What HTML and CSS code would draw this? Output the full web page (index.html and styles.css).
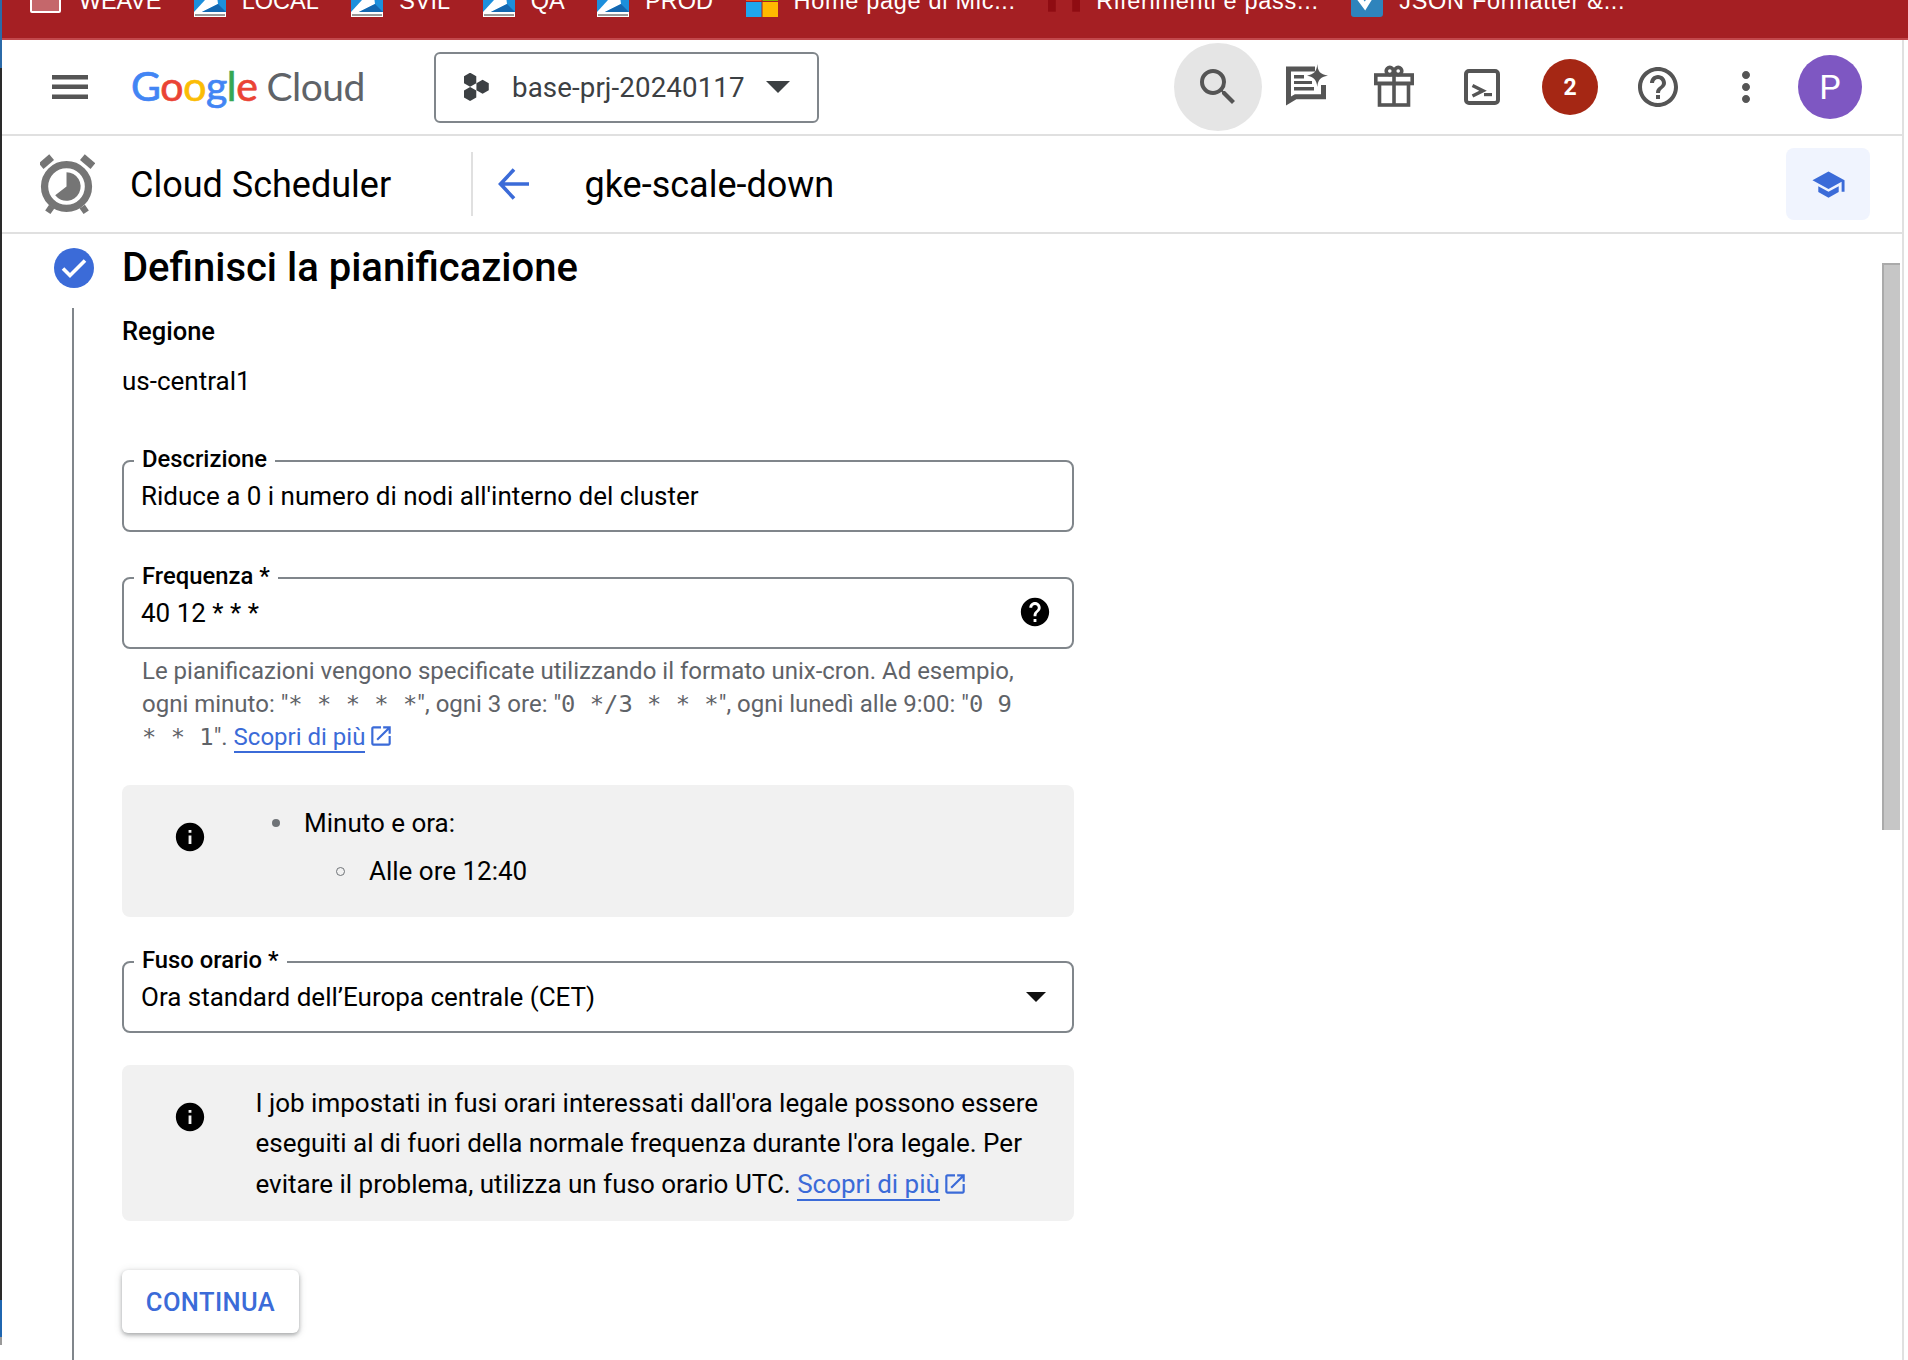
FILE: index.html
```html
<!DOCTYPE html>
<html lang="it">
<head>
<meta charset="utf-8">
<title>Cloud Scheduler</title>
<link rel="stylesheet" href="styles.css">
</head>
<body>
<div class="edge"></div>
<nav class="bookmarks">
  <div class="bm-row">
    <a class="bm bm-weave"><span class="bm-folder"></span>WEAVE</a>
    <a class="bm"><svg class="bm-ico" viewBox="0 0 32 33"><rect width="32" height="33" fill="#fff"/><rect width="32" height="28" fill="#1c8fdc"/><polygon points="0,28 22,4 24,20 8,28" fill="#fff"/><polygon points="8,28 24,20 32,28" fill="#1467b0"/><rect x="1" y="30" width="30" height="2" fill="#999"/></svg>LOCAL</a>
    <a class="bm"><svg class="bm-ico" viewBox="0 0 32 33"><rect width="32" height="33" fill="#fff"/><rect width="32" height="28" fill="#1c8fdc"/><polygon points="0,28 22,4 24,20 8,28" fill="#fff"/><polygon points="8,28 24,20 32,28" fill="#1467b0"/><rect x="1" y="30" width="30" height="2" fill="#999"/></svg>SVIL</a>
    <a class="bm"><svg class="bm-ico" viewBox="0 0 32 33"><rect width="32" height="33" fill="#fff"/><rect width="32" height="28" fill="#1c8fdc"/><polygon points="0,28 22,4 24,20 8,28" fill="#fff"/><polygon points="8,28 24,20 32,28" fill="#1467b0"/><rect x="1" y="30" width="30" height="2" fill="#999"/></svg>QA</a>
    <a class="bm"><svg class="bm-ico" viewBox="0 0 32 33"><rect width="32" height="33" fill="#fff"/><rect width="32" height="28" fill="#1c8fdc"/><polygon points="0,28 22,4 24,20 8,28" fill="#fff"/><polygon points="8,28 24,20 32,28" fill="#1467b0"/><rect x="1" y="30" width="30" height="2" fill="#999"/></svg>PROD</a>
    <a class="bm bm-long"><svg class="bm-ico" viewBox="0 0 32 33"><rect width="15.5" height="17" fill="#f25022"/><rect x="16.5" width="15.5" height="17" fill="#7fba00"/><rect y="18" width="15.5" height="15" fill="#1ea7ee"/><rect x="16.5" y="18" width="15.5" height="15" fill="#ffb900"/></svg>Home page di Mic...</a>
    <a class="bm bm-long"><svg class="bm-ico" viewBox="0 0 33 33"><rect width="8" height="28" fill="#8f0c12"/><rect x="25" width="8" height="28" fill="#8f0c12"/></svg>Riferimenti e pass...</a>
    <a class="bm bm-long"><svg class="bm-ico" viewBox="0 0 32 33"><rect width="32" height="33" rx="3" fill="#2f84bc"/><polyline points="8,14 14,22 24,6" fill="none" stroke="#fff" stroke-width="5"/></svg>JSON Formatter &amp;...</a>
  </div>
</nav>
<div class="app">
  <header class="topbar">
    <svg class="menu" viewBox="0 0 36 24"><rect width="36" height="4.5" fill="#555"/><rect y="9.5" width="36" height="4.5" fill="#555"/><rect y="19.5" width="36" height="4.5" fill="#555"/></svg>
    <div class="logo"><span class="logo-google"><span class="c-b">G</span><span class="c-r">o</span><span class="c-y">o</span><span class="c-b">g</span><span class="c-g">l</span><span class="c-r">e</span></span><span class="logo-cloud">Cloud</span></div>
    <button class="project">
      <svg class="project-ico" viewBox="0 0 26 28"><polygon points="8,0 14.5,3.7 14.5,11 8,14.7 1.5,11 1.5,3.7" fill="#3c4043" transform="translate(-1.5 -.3) scale(.95)"/><polygon points="8,0 14.5,3.7 14.5,11 8,14.7 1.5,11 1.5,3.7" fill="#3c4043" transform="translate(-1.5 14) scale(.95)"/><polygon points="8,0 14.5,3.7 14.5,11 8,14.7 1.5,11 1.5,3.7" fill="#3c4043" transform="translate(11 6.8) scale(.95)"/></svg>
      <span class="project-name">base-prj-20240117</span>
      <span class="caret-dark"></span>
    </button>
    <div class="actions">
      <span class="icon-btn is-active"><svg class="ico48" viewBox="0 0 24 24"><path d="M15.5 14h-.79l-.28-.27A6.471 6.471 0 0 0 16 9.5 6.5 6.5 0 1 0 9.5 16c1.61 0 3.09-.59 4.23-1.57l.27.28v.79l5 4.99L20.49 19l-4.99-5zm-6 0C7.01 14 5 11.99 5 9.5S7.01 5 9.5 5 14 7.01 14 9.5 11.99 14 9.5 14z"/></svg></span>
      <span class="icon-btn"><svg class="ico48" viewBox="0 0 48 48"><path d="M33 6H6.5V38L13.500 33.800H41.500V22" fill="none" stroke="#555" stroke-width="5"/><path d="M12 12h10v3.500H12zM12 18h18v3H12zM12 24h20v3.500H12z"/><path d="M35.300 1C36 9 38 11 46 12.700C38 14 36 17 35.300 24C34.600 17 32 14 25 12.700C32 11 34.600 9 35.300 1Z"/></svg></span>
      <span class="icon-btn"><svg class="ico48" viewBox="0 0 48 48"><g fill="none" stroke="#555" stroke-width="3.600"><rect x="5.800" y="12" width="36.400" height="8.500"/><rect x="9.500" y="20.500" width="29" height="21.500"/><path d="M24 12V42"/><circle cx="19.800" cy="8" r="3.600"/><circle cx="28.200" cy="8" r="3.600"/></g></svg></span>
      <span class="icon-btn"><svg class="ico48" viewBox="0 0 48 48"><rect x="8" y="8" width="32" height="32" rx="3" fill="none" stroke="#555" stroke-width="4"/><path d="M14.500 22.500L25 27.700L14.500 33" fill="none" stroke="#555" stroke-width="3.400"/><rect x="26" y="30" width="8" height="3.200"/></svg></span>
      <span class="icon-btn"><span class="badge">2</span></span>
      <span class="icon-btn"><svg class="ico48" viewBox="0 0 24 24"><path d="M11 18h2v-2h-2v2zm1-16C6.480 2 2 6.480 2 12s4.480 10 10 10 10-4.480 10-10S17.520 2 12 2zm0 18c-4.410 0-8-3.590-8-8s3.590-8 8-8 8 3.590 8 8-3.590 8-8 8zm0-14c-2.210 0-4 1.790-4 4h2c0-1.100.9-2 2-2s2 .9 2 2c0 2-3 1.750-3 5h2c0-2.250 3-2.500 3-5 0-2.210-1.790-4-4-4z"/></svg></span>
      <span class="icon-btn"><svg class="ico48" viewBox="0 0 24 24"><path d="M12 8c1.100 0 2-.9 2-2s-.9-2-2-2-2 .9-2 2 .9 2 2 2zm0 2c-1.100 0-2 .9-2 2s.9 2 2 2 2-.9 2-2-.9-2-2-2zm0 6c-1.100 0-2 .9-2 2s.9 2 2 2 2-.9 2-2-.9-2-2-2z"/></svg></span>
      <span class="icon-btn icon-btn-avatar"><span class="avatar">P</span></span>
    </div>
  </header>
  <div class="subbar">
    <svg class="alarm" viewBox="14 8 55 65"><circle cx="40.500" cy="41" r="22.300" fill="none" stroke="#757575" stroke-width="7.400"/><path d="M40.500 41V26.500A14.500 14.500 0 1 1 29 50Z" fill="#757575"/><rect x="13" y="12" width="14" height="7.500" fill="#757575" transform="rotate(-40 20 15.700)"/><rect x="55" y="12" width="14" height="7.500" fill="#757575" transform="rotate(40 62 15.700)"/><rect x="20.500" y="61" width="6.500" height="7" fill="#757575" transform="rotate(35 24 64)"/><rect x="55" y="61" width="6.500" height="7" fill="#757575" transform="rotate(-35 58 64)"/></svg>
    <span class="product">Cloud Scheduler</span>
    <span class="divider"></span>
    <svg class="back" viewBox="0 0 31 32"><path d="M16 1.500L2.500 16L16 30.500M3 16H31" fill="none" stroke="#3b6bd8" stroke-width="3.600"/></svg>
    <h1 class="job-name">gke-scale-down</h1>
    <span class="teach"><svg class="teach-ico" viewBox="0 0 24 24"><path d="M5 13.180v4L12 21l7-3.820v-4L12 17l-7-3.820zM12 3L1 9l11 6 9-4.910V17h2V9L12 3z"/></svg></span>
  </div>
  <main class="main">
    <div class="scrollthumb"></div>
    <div class="step-head">
      <svg class="check" viewBox="0 0 40 40"><circle cx="20" cy="20" r="20" fill="#3b6bd8"/><polyline points="9,20.500 16,27.500 31,12.500" fill="none" stroke="#fff" stroke-width="3.600"/></svg>
      <h2 class="step-title">Definisci la pianificazione</h2>
    </div>
    <section class="step-body">
      <div class="region-label">Regione</div>
      <div class="region-value">us-central1</div>

      <div class="field field-desc">
        <label class="field-label">Descrizione</label>
        <span class="field-value">Riduce a 0 i numero di nodi all'interno del cluster</span>
      </div>

      <div class="field field-freq">
        <label class="field-label">Frequenza *</label>
        <span class="field-value">40 12 * * *</span>
        <svg class="help-ico" viewBox="0 0 24 24"><path d="M12 2C6.480 2 2 6.480 2 12s4.480 10 10 10 10-4.480 10-10S17.520 2 12 2zm1 17h-2v-2h2v2zm2.070-7.750l-.9.920C13.450 12.900 13 13.500 13 15h-2v-.5c0-1.100.45-2.100 1.170-2.830l1.240-1.260c.37-.36.59-.86.59-1.410 0-1.100-.9-2-2-2s-2 .9-2 2H8c0-2.210 1.790-4 4-4s4 1.790 4 4c0 .88-.36 1.680-.93 2.250z"/></svg>
      </div>
      <p class="hint">Le pianificazioni vengono specificate utilizzando il formato unix-cron. Ad esempio,<br>ogni minuto: "<code>* * * * *</code>", ogni 3 ore: "<code>0 */3 * * *</code>", ogni lunedì alle 9:00: "<code>0 9</code><br><code>* * 1</code>". <a class="link">Scopri di più</a><svg class="ext" viewBox="0 0 24 24"><path d="M19 19H5V5h7V3H5c-1.110 0-2 .9-2 2v14c0 1.100.89 2 2 2h14c1.100 0 2-.9 2-2v-7h-2v7zM14 3v2h3.590l-9.830 9.830 1.410 1.410L19 6.410V10h2V3h-7z"/></svg></p>

      <div class="note note-list">
        <svg class="info-ico" viewBox="0 0 24 24"><path d="M12 2C6.480 2 2 6.480 2 12s4.480 10 10 10 10-4.480 10-10S17.520 2 12 2zm1 15h-2v-6h2v6zm0-8h-2V7h2v2z"/></svg>
        <ul class="list">
          <li class="list-item">Minuto e ora:
            <ul class="sublist"><li class="sublist-item">Alle ore 12:40</li></ul>
          </li>
        </ul>
      </div>

      <div class="field field-tz">
        <label class="field-label">Fuso orario *</label>
        <span class="field-value">Ora standard dell’Europa centrale (CET)</span>
        <span class="caret-black"></span>
      </div>

      <div class="note note-text">
        <svg class="info-ico" viewBox="0 0 24 24"><path d="M12 2C6.480 2 2 6.480 2 12s4.480 10 10 10 10-4.480 10-10S17.520 2 12 2zm1 15h-2v-6h2v6zm0-8h-2V7h2v2z"/></svg>
        <p class="note-copy">I job impostati in fusi orari interessati dall'ora legale possono essere<br>eseguiti al di fuori della normale frequenza durante l'ora legale. Per<br>evitare il problema, utilizza un fuso orario UTC. <a class="link">Scopri di più</a><svg class="ext" viewBox="0 0 24 24"><path d="M19 19H5V5h7V3H5c-1.110 0-2 .9-2 2v14c0 1.100.89 2 2 2h14c1.100 0 2-.9 2-2v-7h-2v7zM14 3v2h3.590l-9.830 9.830 1.410 1.410L19 6.410V10h2V3h-7z"/></svg></p>
      </div>

      <button class="continue">CONTINUA</button>
    </section>
  </main>
</div>
</body>
</html>
```
FILE: styles.css
```css
* { box-sizing: border-box; }
html, body { margin: 0; padding: 0; height: 100%; overflow: hidden; background: #fff; }
body { font-family: Roboto, "Liberation Sans", sans-serif; color: #000; display: flex; flex-direction: column; height: 1360px; width: 1908px; }
h1, h2, p, ul { margin: 0; padding: 0; }

.edge { position: absolute; left: 0; top: 0; width: 2px; height: 1360px; background: linear-gradient(#2b6aa8 0 68px, #2a2a2a 68px 1300px, #1f66b0 1300px 1337px, #999 1337px 1345px, #fff 1345px); }

.bookmarks { height: 40px; flex: none; background: #a51f23; border-bottom: 2px solid #c2484c; overflow: hidden; }
.bm-row { display: flex; align-items: flex-start; gap: 32.500px; padding-left: 30px; margin-top: -16px; font: 23.500px/34px "Liberation Sans", Arial, sans-serif; color: #fff; white-space: nowrap; }
.bm { display: flex; align-items: flex-start; gap: 16px; }
.bm-weave { letter-spacing: -.2px; }
.bm-long { letter-spacing: .7px; }
.bm-folder { width: 31px; height: 29px; margin-right: 2px; background: #c5676b; border: 2px solid #fff; border-radius: 2px; }
.bm-ico { width: 32px; height: 33px; flex: none; }

.app { flex: 1; width: 1904px; border-right: 2px solid #e0e0e0; display: flex; flex-direction: column; min-height: 0; }

.topbar { height: 96px; flex: none; display: flex; align-items: center; border-bottom: 2px solid #e0e0e0; padding-left: 52px; }
.menu { width: 36px; height: 24px; flex: none; }
.logo { margin-left: 43px; margin-bottom: 2px; width: 303px; font-family: Lato, Roboto, sans-serif; font-size: 41px; display: flex; align-items: baseline; gap: 9px; line-height: 48px; flex: none; }
.logo-google { letter-spacing: -.4px; -webkit-text-stroke: .7px currentColor; }
.logo-cloud { color: #5f6368; letter-spacing: -.5px; font-size: 39px; }
.c-b { color: #4285f4; } .c-r { color: #ea4335; } .c-y { color: #fbbc05; } .c-g { color: #34a853; }
.project { width: 385px; height: 71px; flex: none; background: #fff; border: 2px solid #80868b; border-radius: 6px; display: flex; align-items: center; padding: 0 0 0 28px; font-family: Roboto, sans-serif; }
.project-ico { width: 26px; height: 28px; flex: none; }
.project-name { margin-left: 22px; font-size: 27.700px; color: #3c4043; letter-spacing: .1px; }
.caret-dark { margin-left: 21px; width: 0; height: 0; border-left: 12px solid transparent; border-right: 12px solid transparent; border-top: 12px solid #3c4043; }
.actions { margin-left: auto; display: flex; padding-right: 32px; }
.icon-btn { width: 88px; height: 88px; border-radius: 50%; display: flex; align-items: center; justify-content: center; }
.icon-btn-avatar { width: 80px; }
.icon-btn.is-active { background: #e5e5e5; }
.ico48 { width: 48px; height: 48px; fill: #555; }
.badge { width: 56px; height: 56px; border-radius: 50%; background: #a52714; color: #fff; font-weight: 700; font-size: 23px; display: flex; align-items: center; justify-content: center; }
.avatar { width: 64px; height: 64px; border-radius: 50%; background: #7e57c2; color: #fff; font-size: 34px; display: flex; align-items: center; justify-content: center; }

.subbar { height: 98px; flex: none; display: flex; align-items: center; border-bottom: 2px solid #e0e0e0; padding-left: 40px; }
.alarm { width: 55px; height: 64px; flex: none; margin-top: 4px; }
.product { margin-left: 35px; width: 341px; flex: none; font-size: 36px; color: #000; margin-top: 2px; }
.divider { width: 2px; height: 64px; background: #e0e0e0; flex: none; }
.back { margin-left: 25px; width: 31px; height: 32px; flex: none; }
.job-name { margin-left: 55.500px; margin-top: 2px; font-size: 36px; font-weight: 400; color: #000; }
.teach { margin-left: auto; margin-right: 32px; width: 84px; height: 72px; border-radius: 8px; background: #f0f4fe; display: flex; align-items: center; justify-content: center; }
.teach-ico { width: 35px; height: 35px; fill: #3b6bd8; }

.main { flex: 1; min-height: 0; position: relative; padding: 14px 0 0 54px; overflow: hidden; }
.scrollthumb { position: absolute; right: 2px; top: 29px; width: 18px; height: 567px; background: #c6c6c6; border-left: 2px solid #aaa; border-top: 2px solid #aaa; }
.step-head { display: flex; align-items: center; gap: 28px; height: 40px; }
.check { width: 40px; height: 40px; flex: none; }
.step-title { font-size: 40px; line-height: 40px; font-weight: 500; color: #000; }
.step-body { margin: 20px 0 0 18px; border-left: 2px solid #80868b; padding: 8px 0 0 48px; width: 1002px; height: 1100px; }
.region-label { font-size: 25.500px; line-height: 30px; font-weight: 500; }
.region-value { margin-top: 20px; font-size: 26px; line-height: 30px; }

.field { position: relative; height: 72px; border: 2px solid #80868b; border-radius: 8px; display: flex; align-items: center; padding: 0 21px 0 17px; width: 952px; }
.field-desc { margin-top: 64px; }
.field-freq { margin-top: 45px; }
.field-tz { margin-top: 44px; padding-right: 26px; }
.field-label { position: absolute; left: 10px; top: -16px; padding: 0 8px; background: #fff; font-size: 23.800px; line-height: 26px; font-weight: 500; white-space: nowrap; }
.field-value { font-size: 26px; flex: 1; white-space: nowrap; }
.help-ico { width: 34px; height: 34px; flex: none; fill: #000; margin-bottom: 2px; margin-right: -1px; }
.caret-black { width: 0; height: 0; border-left: 10px solid transparent; border-right: 10px solid transparent; border-top: 10px solid #111; }

.hint { margin-top: 6px; padding-left: 20px; font-size: 24px; line-height: 33px; color: #5f6368; white-space: nowrap; }
.hint code { font-family: "DejaVu Sans Mono", "Liberation Mono", monospace; font-size: 23.800px; }
.link { color: #3b6bd8; border-bottom: 2px solid #3b6bd8; }
.ext { width: 26px; height: 26px; margin-left: 2.500px; vertical-align: -4px; fill: #3b6bd8; }

.note { width: 952px; background: #f1f1f1; border-radius: 8px; display: flex; padding-left: 51px; }
.note-list { margin-top: 31px; height: 132px; padding-top: 35px; }
.note-text { margin-top: 32px; height: 156px; padding-top: 35px; }
.info-ico { width: 34px; height: 34px; flex: none; fill: #000; }
.list { margin: -17px 0 0 0; padding-left: 97px; font-size: 26px; line-height: 40px; list-style: none; }
.list-item, .sublist-item { position: relative; }
.list-item::before { content: ""; position: absolute; left: -32px; top: 16px; width: 8px; height: 8px; border-radius: 50%; background: #6f7377; }
.sublist { margin-top: 8px; padding-left: 65px; list-style: none; }
.sublist-item::before { content: ""; position: absolute; left: -33px; top: 16px; width: 7px; height: 7px; border-radius: 50%; border: 1.500px solid #6f7377; }
.note-copy { margin: -17px 0 0 48.500px; font-size: 26px; line-height: 40.300px; white-space: nowrap; }

.continue { display: block; margin-top: 49px; width: 177px; height: 63px; background: #fff; border: 0; border-radius: 6px; box-shadow: 0 2px 4px rgba(60,64,67,.4), 0 1px 8px rgba(60,64,67,.15); color: #3b6bd8; font: 500 25.500px Roboto, sans-serif; letter-spacing: .4px; }
```
